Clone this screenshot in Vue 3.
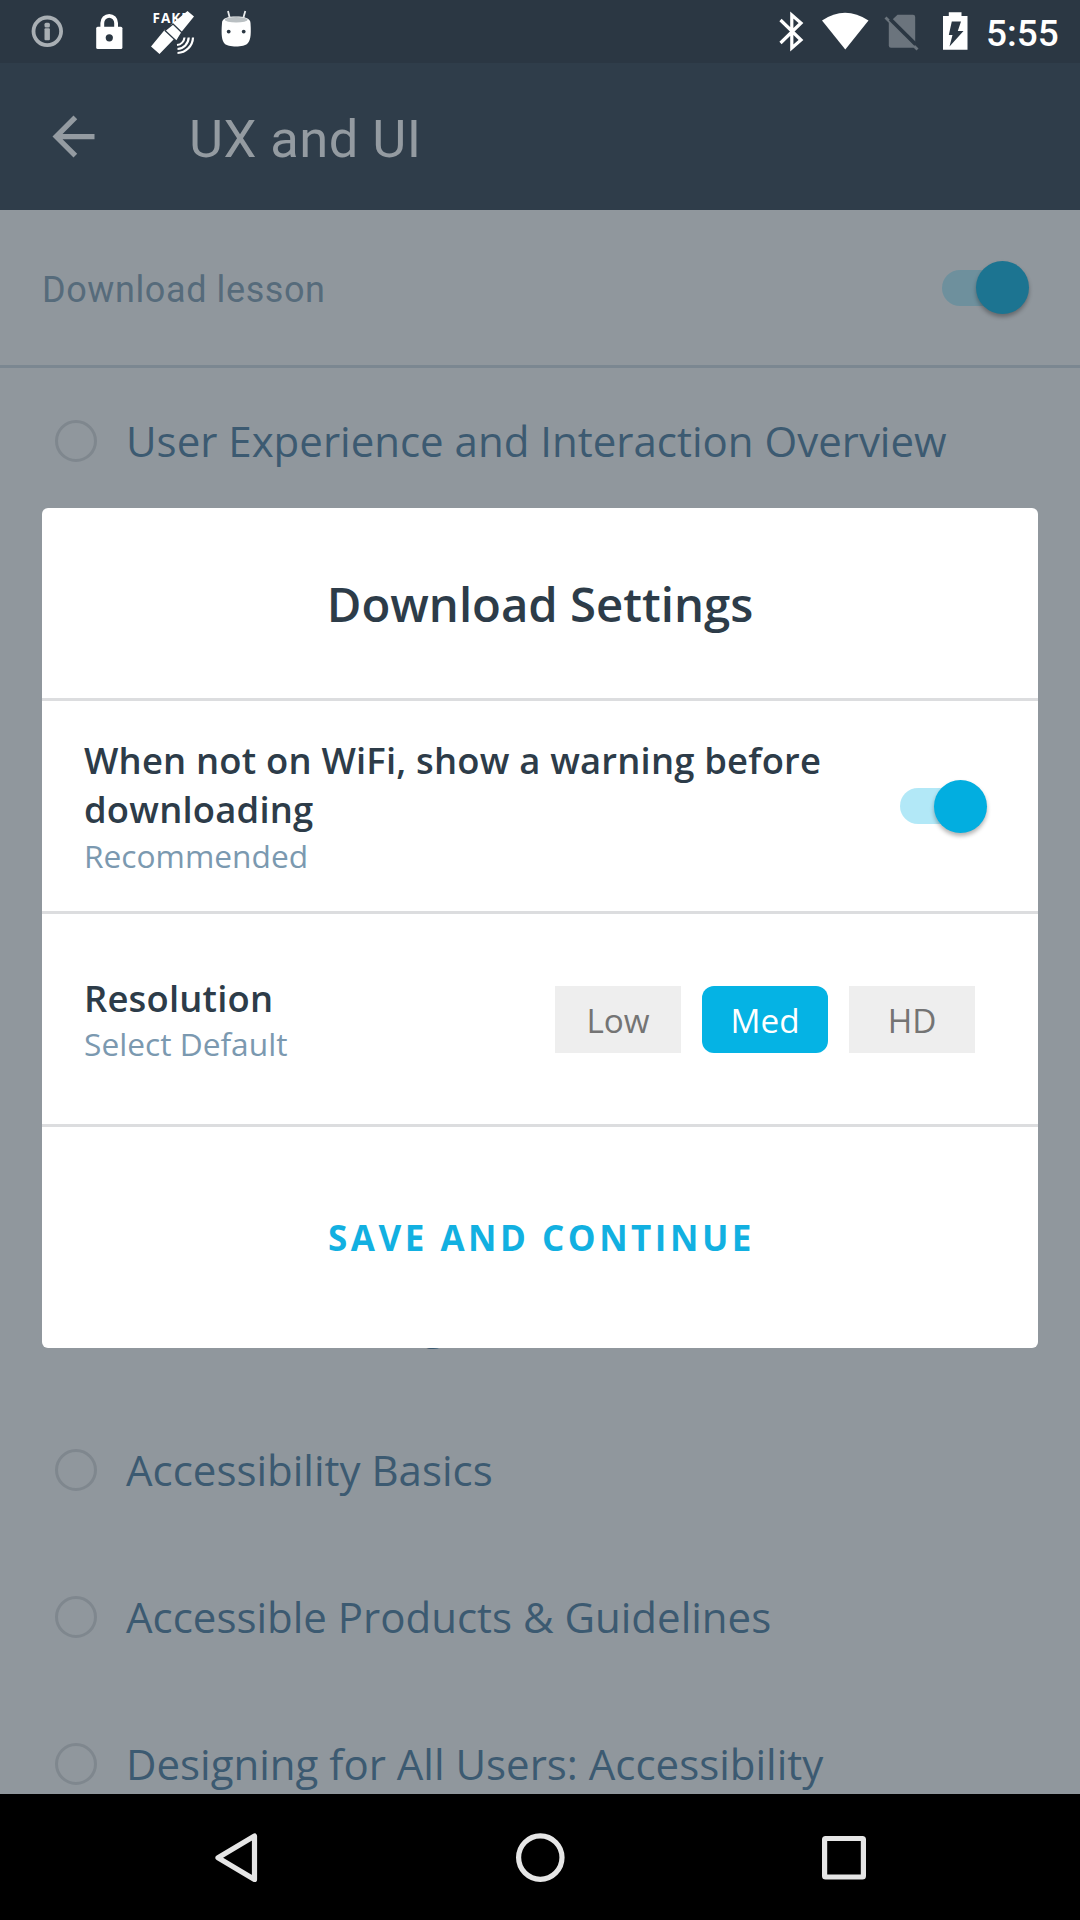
<script setup>
import { ref } from 'vue'

const ROW = 147

const lessons = [
  { title: 'User Experience and Interaction Overview', gap: 0 },
  { title: 'Accessible Design', gap: 5 * ROW },
  { title: 'Accessibility Basics', gap: 0 },
  { title: 'Accessible Products & Guidelines', gap: 0 },
  { title: 'Designing for All Users: Accessibility', gap: 0 }
]

const resolutions = ['Low', 'Med', 'HD']
const selected = ref('Med')
</script>

<template>
  <div class="screen">
    <header class="status">
      <div class="status-left">
        <svg width="34" height="63" viewBox="30 0 34 63">
          <circle cx="47.3" cy="31.3" r="13.8" fill="none" stroke="#a9afb4" stroke-width="3.800" />
          <rect x="44.500" y="22.800" width="5.400" height="4.700" rx="1.500" fill="#a9afb4" />
          <rect x="44.500" y="28.200" width="5.400" height="12" rx="1" fill="#a9afb4" />
        </svg>
        <svg width="30" height="63" viewBox="94 0 30 63">
          <path d="M102.300 29v-6a6.900 7.200 0 0 1 13.800 0v6" fill="none" stroke="#fff" stroke-width="3.800" />
          <rect x="96.200" y="26.800" width="26.200" height="22.200" rx="1.500" fill="#fff" />
          <circle cx="109.300" cy="37.800" r="3.600" fill="#2b3743" />
        </svg>
        <svg width="48" height="63" viewBox="148 0 48 63">
          <text x="152.500" y="23" class="fake">FAKE</text>
          <path d="M151 46.500l8.500 7.500 15-15.500-9.500-9zM170.500 25L187.500 11l6.500 5.500-13 16z" fill="#fff" />
          <path d="M165 30.500l8-6.500 8.800 8.500-5.300 8.800z" fill="#fff" stroke="#2b3743" stroke-width="1.300" stroke-linejoin="round" />
          <path d="M184.500 37.500a8.500 8.500 0 0 1-7.500 7.500M188.700 37.500a12 12 0 0 1-11.200 11.500M193 37.500a16 16 0 0 1-15.500 15.500" fill="none" stroke="#fff" stroke-width="2.200" />
        </svg>
        <svg width="32" height="63" viewBox="220 0 32 63">
          <path d="M228 11l2 8M245.300 11l-2.300 8" stroke="#e9eced" stroke-width="1.800" />
          <path d="M222 23c0-5 6-6.500 14-6.500s14.500 1.500 14.500 6.500c1 14-.500 18-3 20.500-3 4-20 4-23 0-2.500-3-3.500-8-2.500-20.500z" fill="#fff" />
          <ellipse cx="236.200" cy="19.800" rx="11.500" ry="2.800" fill="#b9bfc2" />
          <circle cx="228.700" cy="31.600" r="1.900" fill="#2b3743" />
          <circle cx="243.700" cy="31.600" r="1.900" fill="#2b3743" />
        </svg>
      </div>
      <div class="status-right">
        <svg width="26" height="63" viewBox="778 0 26 63">
          <path d="M780.500 20l20.500 20-9.200 8V15l9.200 8-20.500 20" fill="none" stroke="#fff" stroke-width="3.200" />
        </svg>
        <svg width="48" height="63" viewBox="821 0 48 63">
          <path d="M822 20.500q23-15.500 46.500 0L845.300 49.500z" fill="#fff" />
        </svg>
        <svg width="36" height="63" viewBox="884 0 36 63">
          <path d="M897.500 14.800h15.500a2.200 2.200 0 0 1 2.200 2.200v28.500a2.200 2.200 0 0 1-2.200 2.200h-22a2.200 2.200 0 0 1-2.200-2.200V23z" fill="#6b747d" />
          <path d="M889.500 18.300l29 28.700" stroke="#2b3743" stroke-width="3.400" />
          <path d="M885.500 17.500l32 32" stroke="#6b747d" stroke-width="2.800" />
          <path d="M889.800 19.600l25.400 25.400" stroke="#2b3743" stroke-width="2.400" />
        </svg>
        <svg width="26" height="63" viewBox="942 0 26 63">
          <path d="M948.800 12.300h12.700v3.700h6v33.700H943V16h5.800z" fill="#fff" />
          <path d="M951.800 21.500h9.200l-3.200 9.500h5.700l-14 15.500 3-11.500h-3.700z" fill="#2b3743" />
        </svg>
        <span class="clock">5:55</span>
      </div>
    </header>

    <div class="appbar">
      <svg class="back" viewBox="0 0 24 24"><path d="M20 11H7.830l5.590-5.590L12 4l-8 8 8 8 1.410-1.410L7.830 13H20z" fill="#949ba1" /></svg>
      <h1>UX and UI</h1>
    </div>

    <main class="content">
      <div class="download">
        <span>Download lesson</span>
        <div class="switch dim"><i></i></div>
      </div>
      <ul>
        <li v-for="l in lessons" :key="l.title" :style="{ marginTop: l.gap + 'px' }">
          <span class="ring"></span>
          <span class="title">{{ l.title }}</span>
        </li>
      </ul>
    </main>

    <nav>
      <svg width="50" height="56" viewBox="212 1830 50 56"><path d="M255.500 1836v43.500L219 1857.700z" /></svg>
      <svg width="56" height="56" viewBox="512 1830 56 56"><circle cx="540.300" cy="1857.600" r="21.700" /></svg>
      <svg width="50" height="56" viewBox="819 1830 50 56"><rect x="824.600" y="1838.500" width="38.800" height="38.500" rx="1" /></svg>
    </nav>

    <section class="modal">
      <h2>Download Settings</h2>
      <div class="row wifi">
        <div class="labels">
          <p class="strong">When not on WiFi, show a warning before downloading</p>
          <p class="hint">Recommended</p>
        </div>
        <div class="switch"><i></i></div>
      </div>
      <div class="row resolution">
        <div class="labels">
          <p class="strong">Resolution</p>
          <p class="hint">Select Default</p>
        </div>
        <div class="options">
          <button v-for="r in resolutions" :key="r" :class="{ on: r === selected }" @click="selected = r">{{ r }}</button>
        </div>
      </div>
      <button class="save">SAVE AND CONTINUE</button>
    </section>
  </div>
</template>

<style>
body { margin: 0; overflow: hidden; }
</style>

<style scoped>
* { box-sizing: border-box; }
h1, h2, p, ul { margin: 0; padding: 0; font-weight: 400; }
button { border: 0; padding: 0; font: inherit; }
svg { display: block; flex: none; }
.screen {
  position: relative;
  width: 1080px;
  height: 1920px;
  display: flex;
  flex-direction: column;
  overflow: hidden;
  background: #90979d;
  font-family: "Open Sans", sans-serif;
}
.status {
  flex: none;
  height: 63px;
  background: #2b3743;
  display: flex;
  justify-content: space-between;
  padding: 0 21px 0 30px;
}
.status-left, .status-right { display: flex; }
.status-left svg:nth-child(2) { margin-left: 30px; }
.status-left svg:nth-child(3) { margin-left: 24px; }
.status-left svg:nth-child(4) { margin-left: 24px; }
.status-right svg:nth-child(2) { margin-left: 17px; }
.status-right svg:nth-child(3) { margin-left: 15px; }
.status-right svg:nth-child(4) { margin-left: 22px; }
.fake { font: 700 13.500px "Open Sans", sans-serif; letter-spacing: 1px; fill: #fff; }
.clock {
  width: 73px;
  margin-left: 18px;
  font: 500 37px/67px Roboto, sans-serif;
  color: #fff;
  white-space: nowrap;
}
.appbar {
  flex: none;
  height: 147px;
  background: #2f3d4a;
  display: flex;
  align-items: center;
  padding-left: 42px;
}
.back { width: 63px; height: 63px; }
.appbar h1 {
  margin: 5px 0 0 84px;
  font: 400 52.500px/60px Roboto, sans-serif;
  letter-spacing: .45px;
  color: #949ba1;
}
.content { flex: 1; min-height: 0; overflow: hidden; }
.download {
  height: 158px;
  border-bottom: 3px solid #7b8791;
  display: flex;
  align-items: center;
  justify-content: space-between;
  padding: 0 51px 0 42px;
  font: 400 36px/42px Roboto, sans-serif;
  color: #566b7b;
}
.download span { margin-top: 4px; letter-spacing: .6px; }
.switch {
  width: 87px;
  height: 36px;
  flex: none;
  border-radius: 18px;
  background: linear-gradient(90deg, #b2e8f7 60px, transparent 60px);
  display: flex;
  align-items: center;
  justify-content: flex-end;
}
.switch i {
  width: 53px;
  height: 53px;
  flex: none;
  border-radius: 50%;
  background: #02aee0;
  box-shadow: 0 3px 4px rgba(0, 0, 0, .3);
}
.switch.dim { background: linear-gradient(90deg, #6e909d 60px, transparent 60px); }
.switch.dim i { background: #1c7491; }
li {
  height: 147px;
  display: flex;
  align-items: center;
  padding: 0 0 1px 55px;
}
.ring {
  width: 42px;
  height: 42px;
  border: 3px solid #7f878e;
  border-radius: 50%;
}
.title {
  margin: 0 0 2px 29px;
  font-size: 42px;
  line-height: 57px;
  color: #3c5a71;
  white-space: nowrap;
}
nav {
  flex: none;
  height: 126px;
  background: #000;
  display: flex;
  align-items: center;
  justify-content: space-between;
  padding: 1px 211px 0 211px;
}
nav svg { fill: none; stroke: #e6e6e6; stroke-width: 5.200; stroke-linejoin: round; }
.modal {
  position: absolute;
  left: 42px;
  top: 508px;
  width: 996px;
  height: 840px;
  border-radius: 6px;
  background: #fff;
  display: flex;
  flex-direction: column;
  color: #2d3c49;
}
h2 {
  height: 193px;
  border-bottom: 3px solid #dcdddf;
  text-align: center;
  font-size: 47.300px;
  font-weight: 600;
  line-height: 192px;
}
.row {
  height: 213px;
  border-bottom: 3px solid #dcdddf;
  display: flex;
  align-items: center;
  justify-content: space-between;
  padding-left: 42px;
}
.wifi { padding-right: 51px; }
.resolution { padding-right: 63px; }
.labels { width: 760px; }
.resolution .labels { width: 300px; }
.strong { font-size: 36.400px; font-weight: 600; line-height: 49px; letter-spacing: .2px; }
.hint { font-size: 31.700px; line-height: 43px; color: #7b99b0; }
.resolution .hint { line-height: 41px; }
.options { display: flex; gap: 21px; }
.options button {
  width: 126px;
  height: 67px;
  background: #eee;
  color: #747474;
  font-size: 33.300px;
  line-height: 69px;
}
.options .on { background: #05b3e4; color: #fff; border-radius: 12px; }
.save {
  flex: 1;
  padding: 0 0 1px 3px;
  background: none;
  color: #12b0e1;
  font-size: 35px;
  font-weight: 700;
  letter-spacing: 3.500px;
}
</style>
